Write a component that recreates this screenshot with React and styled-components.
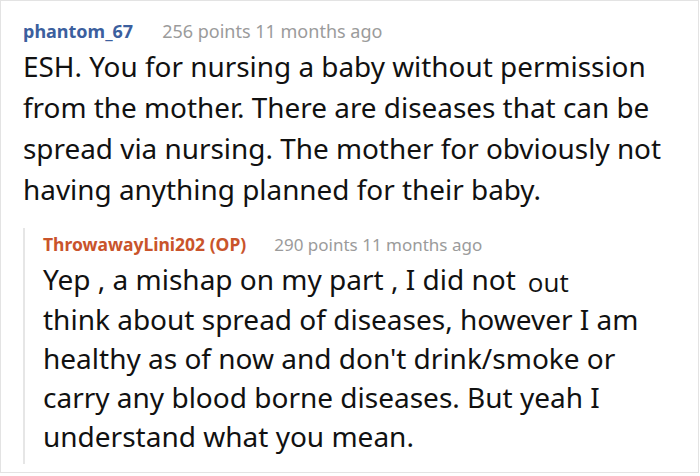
import React from "react";
import styled, { createGlobalStyle } from "styled-components";

const Global = createGlobalStyle`
  html, body { margin: 0; padding: 0; background: #fff; }
  body { font-family: "Noto Sans", "Open Sans", sans-serif; }
`;

const Frame = styled.div`
  box-sizing: border-box;
  width: 699px;
  height: 473px;
  border: 1px solid #e3e3e3;
  padding: 15px 0 0 22px;
  overflow: hidden;
`;

const Header = styled.div`
  display: flex;
  align-items: baseline;
  gap: ${(p) => p.$gap}px;
  height: ${(p) => p.$h}px;
  line-height: ${(p) => p.$h}px;
`;

const User = styled.span`
  font-weight: 700;
  font-size: ${(p) => p.$size}px;
  color: ${(p) => p.$color};
`;

const Meta = styled.span`
  font-size: ${(p) => p.$size}px;
  color: #9b9b9b;
`;

const Body = styled.p`
  margin: 0;
  width: 655px;
  color: #111;
  font-size: 27.9px;
  line-height: 41px;
`;

const Reply = styled.div`
  margin-top: 18px;
  border-left: 2px solid #e6e6e6;
  padding-left: 18px;
  padding-bottom: 8px;
  width: 620px;
`;

const ReplyBody = styled.p`
  margin: 0;
  color: #111;
  font-size: 28px;
  line-height: 39px;
`;

const Stray = styled.span`
  font-family: "Open Sans", sans-serif;
  font-size: 26px;
  position: relative;
  top: 2px;
  margin-left: 12px;
`;

export default function App() {
  return (
    <>
      <Global />
      <Frame>
        <Header $gap={29} $h={30}>
          <User $size={18} $color="#3c5f9e">phantom_67</User>
          <Meta $size={18}>256 points 11 months ago</Meta>
        </Header>
        <Body>
          ESH. You for nursing a baby without permission from the mother. There are diseases
          that can be spread via nursing. The mother for obviously not having anything planned
          for their baby.
        </Body>
        <Reply>
          <Header $gap={28} $h={32}>
            <User $size={17.5} $color="#c9542b">ThrowawayLini202 (OP)</User>
            <Meta $size={17}>290 points 11 months ago</Meta>
          </Header>
          <ReplyBody>
            Yep , a mishap on my part , I did not<Stray>out</Stray>
            <br />
            think about spread of diseases, however I am healthy as of now and don't
            drink/smoke or carry any blood borne diseases. But yeah I understand what you mean.
          </ReplyBody>
        </Reply>
      </Frame>
    </>
  );
}
